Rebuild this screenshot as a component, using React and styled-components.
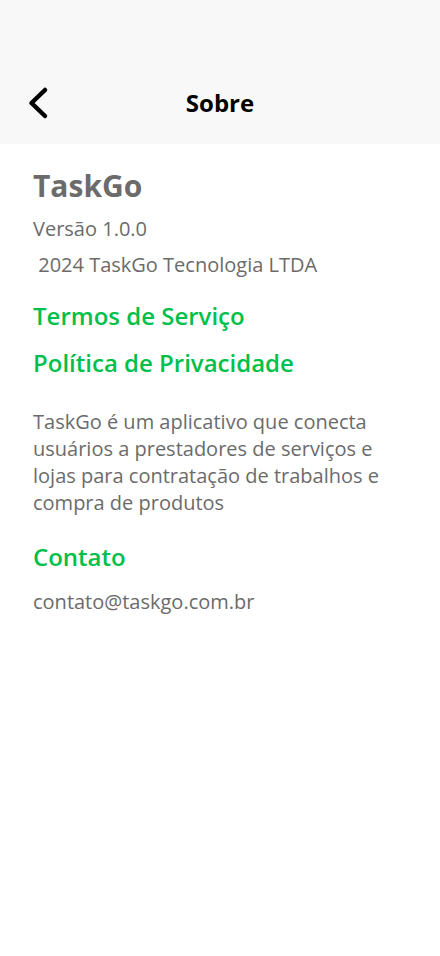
import React from "react";
import styled, { createGlobalStyle } from "styled-components";

const Global = createGlobalStyle`
  html, body { margin: 0; padding: 0; background: #ffffff; }
  body { font-family: "Open Sans", "Noto Sans", sans-serif; }
  * { box-sizing: border-box; }
`;

const Page = styled.div`
  width: 440px;
  min-height: 956px;
  background: #ffffff;
  display: flex;
  flex-direction: column;
`;

const Header = styled.header`
  background: #f8f8f8;
  padding-top: 62px;
  height: 144px;
`;

const Toolbar = styled.div`
  height: 82px;
  display: grid;
  grid-template-columns: 70px 1fr 70px;
  align-items: center;
`;

const BackButton = styled.button`
  border: none;
  background: none;
  padding: 0 0 0 26px;
  height: 40px;
  display: flex;
  align-items: center;
  cursor: pointer;
`;

const Title = styled.h1`
  margin: 0;
  text-align: center;
  font-size: 24px;
  font-weight: 700;
  color: #000;
  line-height: 32px;
`;

const Content = styled.main`
  padding: 22px 33px 0;
  display: flex;
  flex-direction: column;
`;

const AppName = styled.h2`
  margin: 0;
  font-size: 30px;
  line-height: 40px;
  font-weight: 700;
  color: #6b6b6b;
`;

const Text = styled.p`
  margin: ${(p) => p.$mt || 0}px 0 0;
  font-size: 20px;
  line-height: ${(p) => p.$lh || 26}px;
  color: #6b6b6b;
`;

const Link = styled.a`
  display: block;
  margin-top: ${(p) => p.$mt}px;
  font-size: 24px;
  line-height: 32px;
  font-weight: 600;
  color: #00c04b;
  text-decoration: none;
`;

export default function App() {
  return (
    <Page>
      <Global />
      <Header>
        <Toolbar>
          <BackButton aria-label="Voltar">
            <svg width="24" height="34" viewBox="0 0 24 34">
              <path d="M19 4 L5.5 17 L19 30" fill="none" stroke="#000" strokeWidth="4.5" strokeLinecap="round" strokeLinejoin="round" />
            </svg>
          </BackButton>
          <Title>Sobre</Title>
          <div />
        </Toolbar>
      </Header>
      <Content>
        <AppName>TaskGo</AppName>
        <Text $mt={10}>Versão 1.0.0</Text>
        <Text $mt={10}>{"\u00a02024 TaskGo Tecnologia LTDA"}</Text>
        <Link $mt={22}>Termos de Serviço</Link>
        <Link $mt={15}>Política de Privacidade</Link>
        <Text $mt={29} $lh={27}>
          TaskGo é um aplicativo que conecta usuários a prestadores de serviços e lojas para contratação de trabalhos e compra de produtos
        </Text>
        <Link $mt={25}>Contato</Link>
        <Text $mt={16}>contato@taskgo.com.br</Text>
      </Content>
    </Page>
  );
}
